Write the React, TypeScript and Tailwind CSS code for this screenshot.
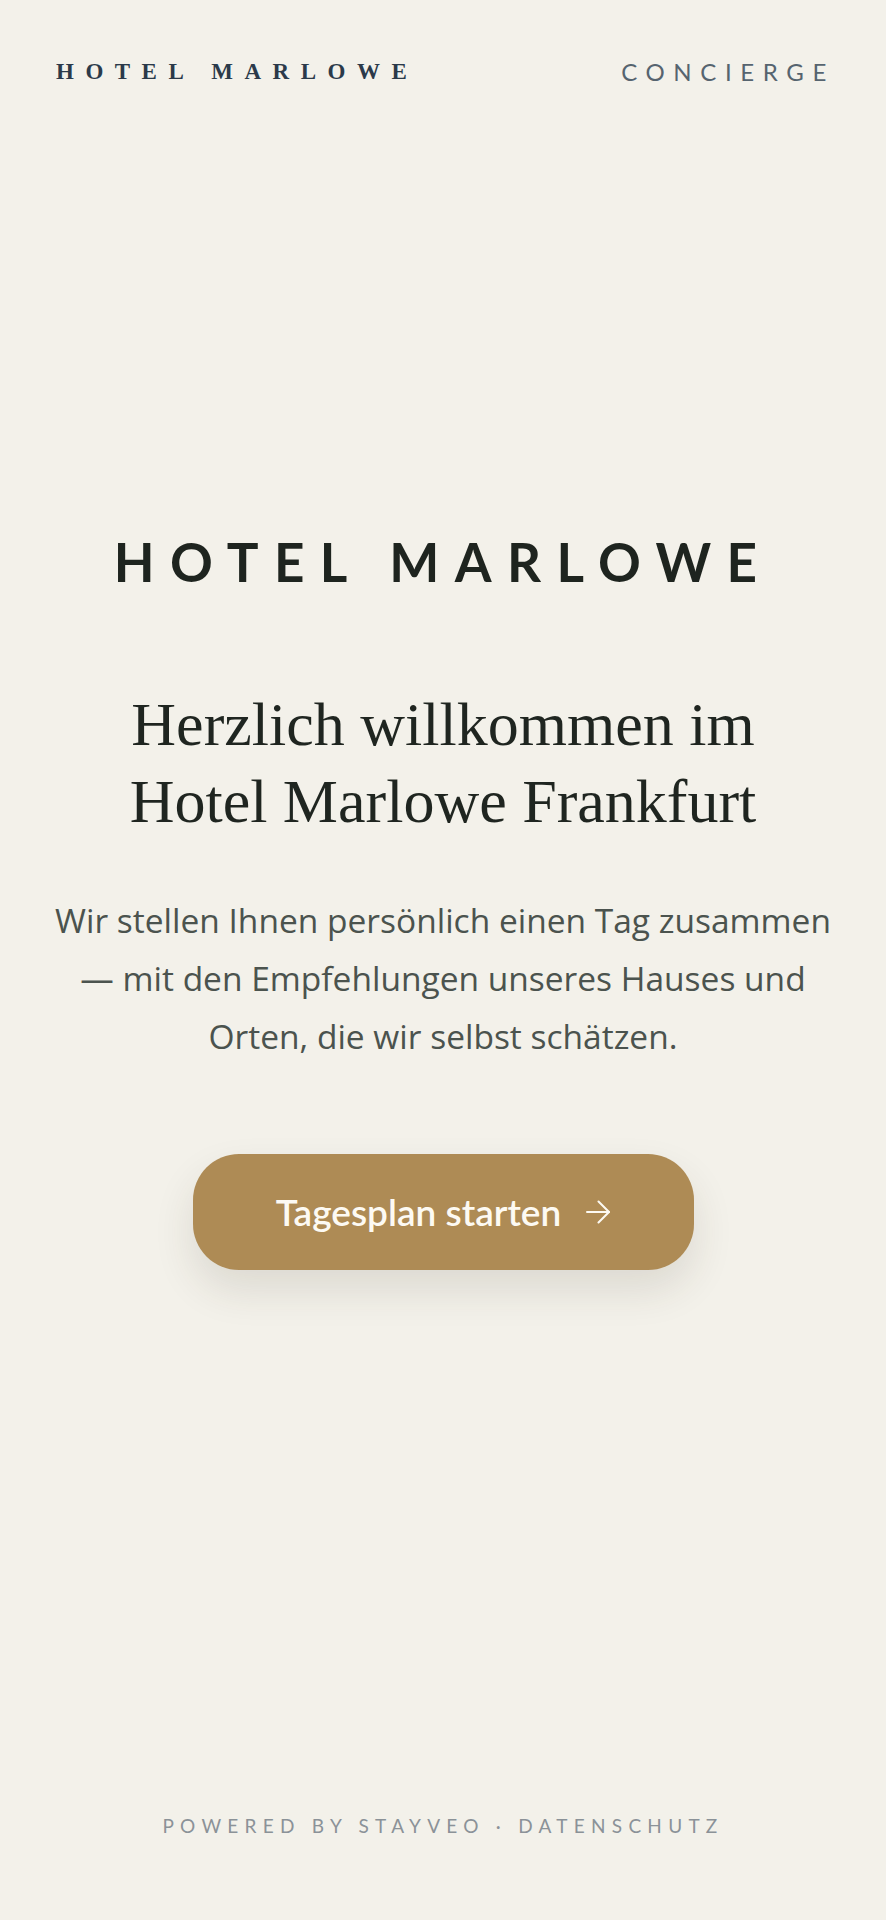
import React from 'react';

function ArrowIcon() {
  return (
    <svg width="24" height="24" viewBox="0 0 24 24" fill="none" stroke="currentColor" strokeWidth="2" strokeLinecap="round" strokeLinejoin="round">
      <path d="M1 12h22" />
      <path d="M12.5 1.5 23 12 12.5 22.5" />
    </svg>
  );
}

export default function App() {
  return (
    <div className="min-h-screen flex flex-col bg-[#f3f1ea] font-['Lato',sans-serif]">
      <header className="flex items-center justify-between px-14 pt-[58px]">
        <span className="font-['Liberation_Serif',serif] font-bold text-[23px] leading-[28px] tracking-[0.5em] text-[#2b3a4a]">
          HOTEL MARLOWE
        </span>
        <span className="font-normal text-[24px] leading-[28px] tracking-[0.36em] text-[#56646f] -mr-[5px]">
          CONCIERGE
        </span>
      </header>

      <main className="flex flex-col items-center text-center pt-[449px]">
        <h1 className="font-bold text-[53px] leading-none tracking-[0.29em] text-[#1e241f]">
          HOTEL MARLOWE
        </h1>
        <h2 className="mt-[98px] max-w-[700px] font-['Liberation_Serif',serif] text-[62px] leading-[77px] text-[#1f2520]">
          Herzlich willkommen im Hotel Marlowe Frankfurt
        </h2>
        <p className="mt-[51px] font-['Open_Sans',sans-serif] text-[33.5px] leading-[58px] text-[#4b534e]">
          Wir stellen Ihnen persönlich einen Tag zusammen
          <br />— mit den Empfehlungen unseres Hauses und
          <br />Orten, die wir selbst schätzen.
        </p>
        <button className="mt-[89px] flex items-center gap-[25px] h-[116px] w-[501px] justify-center rounded-[46px] bg-[#ae8b55] text-[#fdfaf3] text-[37px] font-semibold shadow-[0_20px_40px_rgba(60,50,30,0.12)]">
          <span>Tagesplan starten</span>
          <ArrowIcon />
        </button>
      </main>

      <footer className="mt-auto pb-[80px] text-center text-[19px] leading-[28px] tracking-[0.33em] text-[#8b9298]">
        POWERED BY STAYVEO · DATENSCHUTZ
      </footer>
    </div>
  );
}
